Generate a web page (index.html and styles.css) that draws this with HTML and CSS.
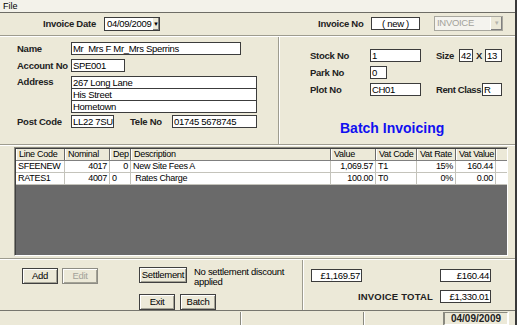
FILE: index.html
```html
<!DOCTYPE html>
<html lang="en">
<head>
<meta charset="UTF-8">
<title>Invoice</title>
<link rel="stylesheet" href="styles.css">
</head>
<body>
<div class="win">
    <div class="menubar"><span>File</span></div>

    <div class="topbar">
        <span class="lbl w-date">Invoice Date</span>
        <div class="combo date-combo"><span class="val">04/09/2009</span><span class="drop">&#9660;</span></div>
        <span class="lbl w-invno">Invoice No</span>
        <div class="box inv-no">( new )</div>
        <div class="combo type-combo off"><span class="val">INVOICE</span><span class="drop">&#9660;</span></div>
    </div>
    <div class="etch"></div>

    <div class="main">
        <div class="cust">
            <div class="row">
                <span class="lbl w-cust">Name</span>
                <div class="box w-name">Mr&nbsp; Mrs F Mr_Mrs Sperrins</div>
            </div>
            <div class="row">
                <span class="lbl w-cust">Account No</span>
                <div class="box w-acc">SPE001</div>
            </div>
            <div class="row top">
                <span class="lbl w-cust">Address</span>
                <div class="addr">
                    <div class="box">267 Long Lane</div>
                    <div class="box">His Street</div>
                    <div class="box">Hometown</div>
                </div>
            </div>
            <div class="row">
                <span class="lbl w-cust">Post Code</span>
                <div class="box w-post">LL22 7SU</div>
                <span class="lbl w-tele">Tele No</span>
                <div class="box w-tel">01745 5678745</div>
            </div>
        </div>

        <div class="plot">
            <div class="row">
                <span class="lbl w-plot">Stock No</span>
                <div class="box w-stock">1</div>
                <span class="lbl w-size">Size</span>
                <div class="box w-s1">42</div>
                <span class="lbl times">X</span>
                <div class="box w-s2">13</div>
            </div>
            <div class="row">
                <span class="lbl w-plot">Park No</span>
                <div class="box w-park">0</div>
            </div>
            <div class="row">
                <span class="lbl w-plot">Plot No</span>
                <div class="box w-stock">CH01</div>
                <span class="lbl w-rent">Rent Class</span>
                <div class="box w-rc">R</div>
            </div>
            <div class="title">Batch Invoicing</div>
        </div>
    </div>
    <div class="etch"></div>

    <div class="gridwrap">
        <div class="grid">
            <div class="gr head">
                <span>Line Code</span><span>Nominal</span><span>Dep</span><span>Description</span><span>Value</span><span>Vat Code</span><span>Vat Rate</span><span>Vat Value</span><span></span>
            </div>
            <div class="gr">
                <span>SFEENEW</span><span class="r">4017</span><span class="r">0</span><span>New Site Fees A</span><span class="r">1,069.57</span><span>T1</span><span class="r">15%</span><span class="r">160.44</span><span></span>
            </div>
            <div class="gr">
                <span>RATES1</span><span class="r">4007</span><span>0</span><span>&nbsp;Rates Charge</span><span class="r">100.00</span><span>T0</span><span class="r">0%</span><span class="r">0.00</span><span></span>
            </div>
            <div class="fill"></div>
        </div>
    </div>
    <div class="etch"></div>

    <div class="bottom">
        <div class="actions">
            <div class="btnrow">
                <button class="btn w-add">Add</button>
                <button class="btn w-add off">Edit</button>
            </div>
            <div class="settle">
                <div class="btnrow">
                    <button class="btn w-settle">Settlement</button>
                    <span class="note">No settlement discount applied</span>
                </div>
                <div class="btnrow gap">
                    <button class="btn w-add">Exit</button>
                    <button class="btn w-add">Batch</button>
                </div>
            </div>
        </div>
        <div class="totals">
            <div class="trow">
                <div class="box r w-tot">&pound;1,169.57</div>
                <div class="box r w-tot push">&pound;160.44</div>
            </div>
            <div class="trow">
                <span class="lbl total-lbl push">INVOICE TOTAL</span>
                <div class="box r w-tot">&pound;1,330.01</div>
            </div>
        </div>
    </div>

    <div class="status">
        <div class="sp s1"></div>
        <div class="sp s2"></div>
        <div class="sp s3"></div>
        <div class="sp s4">04/09/2009</div>
    </div>
</div>
</body>
</html>
```

FILE: styles.css
```css
html, body {
    margin: 0;
    padding: 0;
}
body {
    width: 517px;
    height: 325px;
    overflow: hidden;
    background: #ece9d8;
    font-family: "Liberation Sans", Arial, sans-serif;
    color: #000;
}
.win {
    width: 515px;
    height: 325px;
    border-right: 2px solid #3a3a3a;
    display: flex;
    flex-direction: column;
}
.menubar {
    height: 12px;
    border-bottom: 1px solid #6e6d66;
    background: #f3f2ea;
    font-size: 9px;
    line-height: 12px;
    padding-left: 3px;
}
.etch {
    height: 0;
    border-top: 1px solid #9e9c8f;
    border-bottom: 1px solid #fff;
}

/* labels and boxes */
.lbl {
    font-size: 9.5px;
    font-weight: bold;
    letter-spacing: -0.25px;
    white-space: nowrap;
    color: #222;
}
.box {
    box-sizing: border-box;
    height: 13px;
    border: 1px solid #3c3c3c;
    background: #fff;
    font-size: 9.5px;
    letter-spacing: -0.3px;
    line-height: 11px;
    padding: 0 1px;
    white-space: nowrap;
    overflow: hidden;
}
.box.r, .r {
    text-align: right;
}
.row {
    display: flex;
    align-items: center;
    height: 13px;
}
.row.top {
    align-items: flex-start;
    height: auto;
}

/* header */
.topbar {
    height: 22px;
    display: flex;
    align-items: center;
    padding-left: 43px;
}
.w-date { width: 61px; }
.w-invno { width: 53px; margin-left: 158px; }
.combo {
    box-sizing: border-box;
    height: 14px;
    border: 1px solid #3c3c3c;
    background: #fff;
    display: flex;
    font-size: 9.5px;
    letter-spacing: -0.3px;
    line-height: 12px;
}
.combo .val {
    flex: 1;
    padding-left: 2px;
}
.combo .drop {
    width: 11px;
    background: #ece9d8;
    border-left: 1px solid #fff;
    box-shadow: inset -1px -1px #808080;
    font-size: 6px;
    text-align: center;
    line-height: 12px;
}
.date-combo { width: 56px; }
.inv-no {
    width: 49px;
    text-align: center;
}
.type-combo {
    width: 69px;
    margin-left: 14px;
    height: 15px;
}
.type-combo.off {
    background: #f4f3ee;
    border-color: #a8a79e;
    color: #a3a29a;
}
.type-combo.off .drop { color: #b5b4ac; line-height: 13px; }

/* customer / plot panels */
.main {
    height: 109px;
    display: flex;
}
.cust {
    width: 278px;
    padding: 5px 0 0 17px;
    box-sizing: border-box;
    display: flex;
    flex-direction: column;
    gap: 4px;
}
.cust .row:last-child { margin-top: -2px; }
.w-cust { width: 54px; }
.w-name { width: 170px; }
.w-acc { width: 54px; }
.addr {
    display: flex;
    flex-direction: column;
    width: 186px;
}
.addr .box + .box { margin-top: -1px; }
.w-post { width: 43px; }
.w-tele { width: 42px; margin-left: 16px; }
.w-tel { width: 85px; }

.plot {
    flex: 1;
    border-left: 1px solid #9e9c8f;
    box-shadow: inset 1px 0 #fff;
    padding: 12px 0 0 31px;
    display: flex;
    flex-direction: column;
    gap: 4px;
}
.w-plot { width: 60px; }
.w-stock { width: 51px; }
.w-size { width: 23px; margin-left: 15px; }
.w-s1 { width: 14px; }
.times { width: 12px; text-align: center; }
.w-s2 { width: 17px; }
.w-park { width: 17px; }
.w-rent { width: 46px; margin-left: 15px; letter-spacing: -0.4px; }
.w-rc { width: 20px; }
.title {
    margin: 20px 0 0 30px;
    font-size: 14px;
    font-weight: bold;
    color: #1010f0;
    line-height: 16px;
}

/* line grid */
.gridwrap {
    height: 109px;
    padding: 1px 7px 2px 14px;
}
.grid {
    height: 109px;
    box-sizing: border-box;
    border: 1px solid;
    border-color: #8a897f #fff #fff #8a897f;
    box-shadow: inset 1px 1px #404040;
    padding: 1px 0 0 1px;
    display: flex;
    flex-direction: column;
}
.gr {
    display: grid;
    grid-template-columns: 49px 45px 21px 200px 45px 41px 39px 40px 10px;
    height: 11px;
    background: #fff;
    font-size: 9px;
    letter-spacing: -0.3px;
    line-height: 11px;
    border-bottom: 1px solid #c4c3bb;
}
.gr span {
    padding: 0 2px;
    border-right: 1px solid #c4c3bb;
    white-space: nowrap;
    overflow: hidden;
}
.gr span:last-child { border-right: 0; }
.gr.head {
    background: #ece9d8;
    border-bottom: 1px solid #808080;
}
.gr.head span {
    border-left: 1px solid #fff;
    border-right: 1px solid #6a6a6a;
}
.gr.head span:last-child { border-right: 0; }
.fill {
    flex: 1;
    background: #6a6a6a;
}

/* bottom area */
.bottom {
    height: 51px;
    display: flex;
    border-bottom: 1px solid #77766e;
}
.actions {
    width: 302px;
    display: flex;
    padding: 8px 0 0 22px;
    box-sizing: border-box;
}
.btnrow {
    display: flex;
    gap: 4px;
    align-items: flex-start;
}
.btn {
    box-sizing: border-box;
    height: 16px;
    padding: 0;
    border: 1px solid #404040;
    background: #ece9d8;
    box-shadow: inset 1px 1px #fff, inset -1px -1px #a3a295;
    font-family: "Liberation Sans", Arial, sans-serif;
    font-size: 9.5px;
    letter-spacing: -0.3px;
    line-height: 13px;
    color: #000;
}
.btn.off { color: #a3a29a; border-color: #8d8c84; }
.w-add { width: 36px; }
.w-settle { width: 48px; }
.settle {
    margin: -1px 0 0 41px;
}
.settle .btnrow.gap {
    margin-top: 7px;
    gap: 5px;
}
.note {
    width: 100px;
    margin-left: 3px;
    font-size: 9.5px;
    letter-spacing: -0.3px;
    line-height: 10px;
}
.totals {
    flex: 1;
    border-left: 1px solid #9e9c8f;
    box-shadow: inset 1px 0 #fff;
    padding: 9px 24px 0 8px;
    display: flex;
    flex-direction: column;
    gap: 8px;
}
.trow {
    display: flex;
    align-items: center;
}
.w-tot { width: 51px; }
.push { margin-left: auto; }
.total-lbl {
    margin-right: 7px;
    letter-spacing: 0.2px;
    font-size: 9.5px;
}

/* status bar */
.status {
    flex: 1;
    display: flex;
    padding-top: 1px;
}
.sp {
    border-right: 1px solid #8a897f;
    box-shadow: 1px 0 #fff;
    font-size: 10px;
    font-weight: bold;
    line-height: 11px;
}
.s1 { width: 240px; }
.s2 { width: 122px; }
.s3 { width: 79px; }
.s4 {
    width: 62px;
    border: 1px solid;
    border-color: #8a897f #fff #fff #8a897f;
    text-align: center;
    color: #222;
}
```
